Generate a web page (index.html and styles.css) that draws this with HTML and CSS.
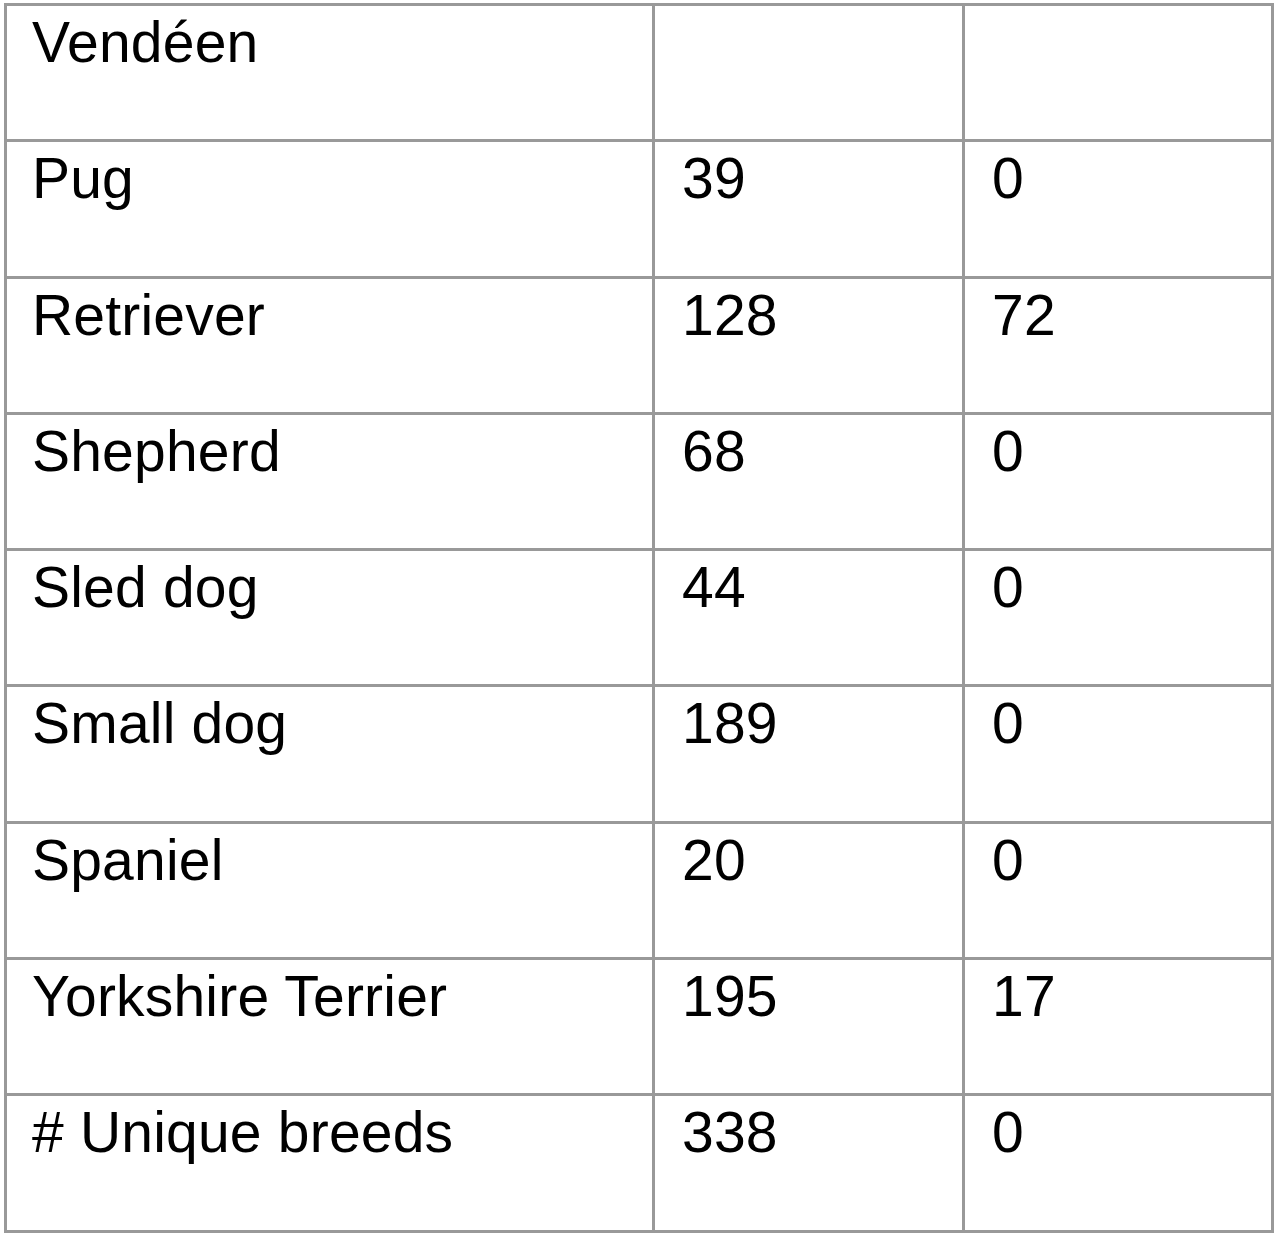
FILE: index.html
```html
<!DOCTYPE html>
<html>
<head>
<meta charset="utf-8">
<link rel="stylesheet" href="styles.css">
</head>
<body>
<table class="breeds">
  <colgroup>
    <col class="c1"><col class="c2"><col class="c3">
  </colgroup>
  <tbody>
    <tr><td>Vendéen</td><td class="num"></td><td class="num"></td></tr>
    <tr><td>Pug</td><td class="num">39</td><td class="num">0</td></tr>
    <tr><td>Retriever</td><td class="num">128</td><td class="num">72</td></tr>
    <tr><td>Shepherd</td><td class="num">68</td><td class="num">0</td></tr>
    <tr><td>Sled dog</td><td class="num">44</td><td class="num">0</td></tr>
    <tr><td>Small dog</td><td class="num">189</td><td class="num">0</td></tr>
    <tr><td>Spaniel</td><td class="num">20</td><td class="num">0</td></tr>
    <tr><td>Yorkshire Terrier</td><td class="num">195</td><td class="num">17</td></tr>
    <tr><td># Unique breeds</td><td class="num">338</td><td class="num">0</td></tr>
  </tbody>
</table>
</body>
</html>
```
FILE: styles.css
```css
html, body {
  margin: 0;
  padding: 0;
  background: #ffffff;
}
body {
  padding: 3px 0 0 4px;
  font-family: "Liberation Sans", Arial, sans-serif;
  color: #000000;
}
.breeds {
  border-collapse: separate;
  border-spacing: 0;
  border-top: 3px solid #999999;
  border-left: 3px solid #999999;
  table-layout: fixed;
  width: 1270px;
}
.c1 { width: 648px; }
.c2 { width: 310px; }
.c3 { width: 309px; }
.breeds td {
  border-right: 3px solid #999999;
  border-bottom: 3px solid #999999;
  height: 133.3px;
  box-sizing: border-box;
  padding: 4px 10px 0 25px;
  vertical-align: top;
  font-size: 57px;
  line-height: 64px;
  letter-spacing: 0.2px;
  white-space: nowrap;
}
.breeds td.num {
  padding-left: 27px;
}
.breeds tr { height: 136.3px; }
```
